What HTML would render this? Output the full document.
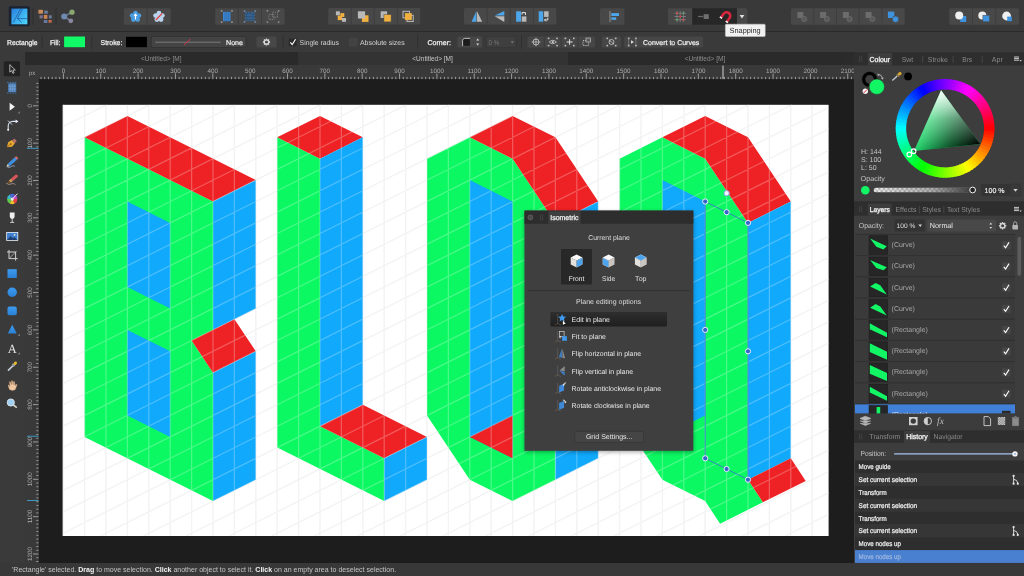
<!DOCTYPE html>
<html><head><meta charset="utf-8"><title>Affinity Designer - Isometric</title>
<style>
*{box-sizing:border-box;margin:0;padding:0}
html,body{width:1024px;height:576px;overflow:hidden;background:#1e1e1e}
body{font-family:"Liberation Sans",sans-serif;font-size:7px;color:#d8d8d8}
#app{position:relative;width:1024px;height:576px;overflow:hidden;background:#1e1e1e;will-change:transform}
svg text{text-rendering:geometricPrecision}
.abs{position:absolute}
#canvasbg{left:38.5px;top:79.2px;width:816px;height:485px;background:#1d1d1d}
#topbar{left:0;top:0;width:1024px;height:32px;background:#393939;border-bottom:1px solid #2a2a2a}
#ctxbar{left:0;top:32px;width:1024px;height:20px;background:#3a3a3a}
#tabbar{left:25px;top:52px;width:829px;height:13.4px;background:#2b2b2b}
.doctab{top:0;height:13.4px;line-height:13.6px;text-align:center;color:#8d8d8d;font-size:6.5px;background:#2a2a2a}
.doctab.act{background:#333;color:#c8c8c8}
#hruler{left:25px;top:65.4px;width:829px;height:13.8px;background:#393939}
#vruler{left:25px;top:65.4px;width:13.5px;height:498.6px;background:#393939}
#toolcol{left:0;top:52px;width:25px;height:512px;background:#3a3a3a}
#status{left:0;top:563px;width:1024px;height:13px;background:#383838;line-height:13.2px;font-size:7.03px;color:#c4c4c4;white-space:nowrap}
#status span{position:absolute;left:12px;top:0}
#status b{color:#f2f2f2}

</style></head><body>
<div id="app">
<div class="abs" id="canvasbg"></div>
<svg class="abs" style="left:0;top:0" width="1024" height="576" viewBox="0 0 1024 576">
<defs><clipPath id="pg"><rect x="62.7" y="104.8" width="765.9" height="431.2"/></clipPath></defs>
<rect x="62.7" y="104.8" width="765.9" height="431.2" fill="#fff"/>
<path d="M63.2 104.8V536.0M84.6 104.8V536.0M106.0 104.8V536.0M127.4 104.8V536.0M148.8 104.8V536.0M170.2 104.8V536.0M191.6 104.8V536.0M213.0 104.8V536.0M234.4 104.8V536.0M255.8 104.8V536.0M277.2 104.8V536.0M298.6 104.8V536.0M320.0 104.8V536.0M341.4 104.8V536.0M362.8 104.8V536.0M384.2 104.8V536.0M405.6 104.8V536.0M427.0 104.8V536.0M448.4 104.8V536.0M469.8 104.8V536.0M491.2 104.8V536.0M512.6 104.8V536.0M534.0 104.8V536.0M555.4 104.8V536.0M576.8 104.8V536.0M598.2 104.8V536.0M619.6 104.8V536.0M641.0 104.8V536.0M662.4 104.8V536.0M683.8 104.8V536.0M705.2 104.8V536.0M726.6 104.8V536.0M748.0 104.8V536.0M769.4 104.8V536.0M790.8 104.8V536.0M812.2 104.8V536.0M62.7 105.5L64.0 104.8M62.7 126.8L106.8 104.8M62.7 148.2L149.6 104.8M62.7 169.7L192.4 104.8M62.7 191.1L235.2 104.8M62.7 212.4L278.0 104.8M62.7 233.8L320.8 104.8M62.7 255.2L363.6 104.8M62.7 276.6L406.4 104.8M62.7 298.1L449.2 104.8M62.7 319.4L492.0 104.8M62.7 340.8L534.8 104.8M62.7 362.2L577.6 104.8M62.7 383.6L620.4 104.8M62.7 405.0L663.2 104.8M62.7 426.4L706.0 104.8M62.7 447.8L748.8 104.8M62.7 469.2L791.6 104.8M62.7 490.6L828.6 107.7M62.7 512.0L828.6 129.1M62.7 533.5L828.6 150.5M100.4 536.0L828.6 171.9M143.2 536.0L828.6 193.3M186.0 536.0L828.6 214.7M228.8 536.0L828.6 236.1M271.6 536.0L828.6 257.5M314.4 536.0L828.6 278.9M357.2 536.0L828.6 300.3M400.0 536.0L828.6 321.7M442.8 536.0L828.6 343.1M485.6 536.0L828.6 364.5M528.4 536.0L828.6 385.9M571.2 536.0L828.6 407.3M614.0 536.0L828.6 428.7M656.8 536.0L828.6 450.1M699.6 536.0L828.6 471.5M742.4 536.0L828.6 492.9M785.2 536.0L828.6 514.3M828.0 536.0L828.6 535.7" stroke="#e6e6e6" stroke-width="1.25" fill="none" opacity="0.66" clip-path="url(#pg)"/>
<polygon points="84.6,137.3 213.0,201.5 213.0,329.9 191.6,340.6 213.0,372.7 213.0,501.1 84.6,436.9" fill="#0cf862" />
<polygon points="127.4,201.5 170.2,222.9 170.2,308.5 127.4,287.1" fill="#10a9fc" />
<polygon points="127.4,329.9 170.2,351.3 170.2,436.9 127.4,415.5" fill="#10a9fc" />
<polygon points="84.6,137.3 127.4,115.9 255.8,180.1 213.0,201.5" fill="#ee2224" />
<polygon points="213.0,201.5 255.8,180.1 255.8,308.5 213.0,329.9" fill="#10a9fc" />
<polygon points="191.6,340.6 234.4,319.2 255.8,351.3 213.0,372.7" fill="#ee2224" />
<polygon points="213.0,372.7 255.8,351.3 255.8,479.7 213.0,501.1" fill="#10a9fc" />
<polygon points="277.2,137.3 320.0,158.7 320.0,426.2 384.2,458.3 384.2,501.1 277.2,447.6" fill="#0cf862" />
<polygon points="277.2,137.3 320.0,115.9 362.8,137.3 320.0,158.7" fill="#ee2224" />
<polygon points="320.0,158.7 362.8,137.3 362.8,404.8 320.0,426.2" fill="#10a9fc" />
<polygon points="320.0,426.2 362.8,404.8 427.0,436.9 384.2,458.3" fill="#ee2224" />
<polygon points="384.2,458.3 427.0,436.9 427.0,479.7 384.2,501.1" fill="#10a9fc" />
<polygon points="427.0,158.7 469.8,137.3 512.6,158.7 555.4,222.9 555.4,479.7 512.6,501.1 469.8,479.7 427.0,415.5" fill="#0cf862" />
<polygon points="469.8,180.1 512.6,201.5 512.6,458.3 469.8,436.9" fill="#10a9fc" />
<polygon points="469.8,436.9 512.6,415.5 512.6,458.3" fill="#ee2224" />
<polygon points="469.8,137.3 512.6,115.9 555.4,137.3 598.2,201.5 555.4,222.9 512.6,158.7" fill="#ee2224" />
<polygon points="555.4,222.9 598.2,201.5 598.2,458.3 555.4,479.7" fill="#10a9fc" />
<polygon points="619.6,158.7 662.4,137.3 705.2,158.7 748.0,222.9 748.0,479.7 762.9,502.3 720.1,523.7 705.2,501.1 662.4,479.7 619.6,415.5" fill="#0cf862" />
<polygon points="662.4,180.1 705.2,201.5 705.2,415.5 662.4,436.9" fill="#10a9fc" />
<polygon points="662.4,137.3 705.2,115.9 748.0,137.3 790.8,201.5 748.0,222.9 705.2,158.7" fill="#ee2224" />
<polygon points="748.0,222.9 790.8,201.5 790.8,458.3 748.0,479.7" fill="#10a9fc" />
<polygon points="748.0,479.7 790.8,458.3 805.7,480.9 762.9,502.3" fill="#ee2224" />
<path d="M63.2 104.8V536.0M84.6 104.8V536.0M106.0 104.8V536.0M127.4 104.8V536.0M148.8 104.8V536.0M170.2 104.8V536.0M191.6 104.8V536.0M213.0 104.8V536.0M234.4 104.8V536.0M255.8 104.8V536.0M277.2 104.8V536.0M298.6 104.8V536.0M320.0 104.8V536.0M341.4 104.8V536.0M362.8 104.8V536.0M384.2 104.8V536.0M405.6 104.8V536.0M427.0 104.8V536.0M448.4 104.8V536.0M469.8 104.8V536.0M491.2 104.8V536.0M512.6 104.8V536.0M534.0 104.8V536.0M555.4 104.8V536.0M576.8 104.8V536.0M598.2 104.8V536.0M619.6 104.8V536.0M641.0 104.8V536.0M662.4 104.8V536.0M683.8 104.8V536.0M705.2 104.8V536.0M726.6 104.8V536.0M748.0 104.8V536.0M769.4 104.8V536.0M790.8 104.8V536.0M812.2 104.8V536.0M62.7 105.5L64.0 104.8M62.7 126.8L106.8 104.8M62.7 148.2L149.6 104.8M62.7 169.7L192.4 104.8M62.7 191.1L235.2 104.8M62.7 212.4L278.0 104.8M62.7 233.8L320.8 104.8M62.7 255.2L363.6 104.8M62.7 276.6L406.4 104.8M62.7 298.1L449.2 104.8M62.7 319.4L492.0 104.8M62.7 340.8L534.8 104.8M62.7 362.2L577.6 104.8M62.7 383.6L620.4 104.8M62.7 405.0L663.2 104.8M62.7 426.4L706.0 104.8M62.7 447.8L748.8 104.8M62.7 469.2L791.6 104.8M62.7 490.6L828.6 107.7M62.7 512.0L828.6 129.1M62.7 533.5L828.6 150.5M100.4 536.0L828.6 171.9M143.2 536.0L828.6 193.3M186.0 536.0L828.6 214.7M228.8 536.0L828.6 236.1M271.6 536.0L828.6 257.5M314.4 536.0L828.6 278.9M357.2 536.0L828.6 300.3M400.0 536.0L828.6 321.7M442.8 536.0L828.6 343.1M485.6 536.0L828.6 364.5M528.4 536.0L828.6 385.9M571.2 536.0L828.6 407.3M614.0 536.0L828.6 428.7M656.8 536.0L828.6 450.1M699.6 536.0L828.6 471.5M742.4 536.0L828.6 492.9M785.2 536.0L828.6 514.3M828.0 536.0L828.6 535.7" stroke="#ffffff" stroke-width="1.25" fill="none" opacity="0.25" clip-path="url(#pg)"/>
<path d="M705.2 201.5L748.0 222.9V479.7L705.2 458.3Z" fill="none" stroke="#3b6fd0" stroke-width="0.8"/><circle cx="705.2" cy="201.5" r="2.6" fill="#3565c8" stroke="#e6edff" stroke-width="1"/><circle cx="726.6" cy="212.2" r="2.6" fill="#3565c8" stroke="#e6edff" stroke-width="1"/><circle cx="748.0" cy="222.9" r="2.6" fill="#3565c8" stroke="#e6edff" stroke-width="1"/><circle cx="705.2" cy="329.9" r="2.6" fill="#3565c8" stroke="#e6edff" stroke-width="1"/><circle cx="748.0" cy="351.3" r="2.6" fill="#3565c8" stroke="#e6edff" stroke-width="1"/><circle cx="705.2" cy="458.3" r="2.6" fill="#3565c8" stroke="#e6edff" stroke-width="1"/><circle cx="726.6" cy="469.0" r="2.6" fill="#3565c8" stroke="#e6edff" stroke-width="1"/><circle cx="748.0" cy="479.7" r="2.6" fill="#3565c8" stroke="#e6edff" stroke-width="1"/><circle cx="726.6" cy="193.2" r="2.6" fill="#f4f6ff" stroke="#8aa4e6" stroke-width="1"/>
</svg>
<div class="abs" id="topbar"></div>
<div class="abs" id="ctxbar"></div>
<div class="abs" id="tabbar"><div class="abs doctab" style="left:0;width:272.5px">&lt;Untitled&gt; [M]</div><div class="abs doctab act" style="left:272.5px;width:270.1px">&lt;Untitled&gt; [M]</div><div class="abs doctab" style="left:542.6px;width:274.8px;">&lt;Untitled&gt; [M]</div></div>
<div class="abs" id="hruler"></div>
<div class="abs" id="vruler"></div>
<svg class="abs" style="left:0;top:0" width="1024" height="576" viewBox="0 0 1024 576" font-family="Liberation Sans, sans-serif" font-size="6.3" fill="#ababab">
<path d="M40.99 76.9V79.2M44.72 76.9V79.2M48.46 76.9V79.2M52.20 76.9V79.2M55.93 76.9V79.2M59.66 76.9V79.2M63.40 73.4V79.2M67.14 76.9V79.2M70.87 76.9V79.2M74.61 76.9V79.2M78.34 76.9V79.2M82.08 76.9V79.2M85.81 76.9V79.2M89.55 76.9V79.2M93.28 76.9V79.2M97.02 76.9V79.2M100.75 73.4V79.2M104.48 76.9V79.2M108.22 76.9V79.2M111.95 76.9V79.2M115.69 76.9V79.2M119.42 76.9V79.2M123.16 76.9V79.2M126.89 76.9V79.2M130.63 76.9V79.2M134.37 76.9V79.2M138.10 73.4V79.2M141.84 76.9V79.2M145.57 76.9V79.2M149.31 76.9V79.2M153.04 76.9V79.2M156.78 76.9V79.2M160.51 76.9V79.2M164.25 76.9V79.2M167.98 76.9V79.2M171.72 76.9V79.2M175.45 73.4V79.2M179.19 76.9V79.2M182.92 76.9V79.2M186.66 76.9V79.2M190.39 76.9V79.2M194.12 76.9V79.2M197.86 76.9V79.2M201.59 76.9V79.2M205.33 76.9V79.2M209.06 76.9V79.2M212.80 73.4V79.2M216.53 76.9V79.2M220.27 76.9V79.2M224.00 76.9V79.2M227.74 76.9V79.2M231.47 76.9V79.2M235.21 76.9V79.2M238.94 76.9V79.2M242.68 76.9V79.2M246.41 76.9V79.2M250.15 73.4V79.2M253.88 76.9V79.2M257.62 76.9V79.2M261.36 76.9V79.2M265.09 76.9V79.2M268.82 76.9V79.2M272.56 76.9V79.2M276.30 76.9V79.2M280.03 76.9V79.2M283.76 76.9V79.2M287.50 73.4V79.2M291.24 76.9V79.2M294.97 76.9V79.2M298.70 76.9V79.2M302.44 76.9V79.2M306.18 76.9V79.2M309.91 76.9V79.2M313.64 76.9V79.2M317.38 76.9V79.2M321.11 76.9V79.2M324.85 73.4V79.2M328.58 76.9V79.2M332.32 76.9V79.2M336.05 76.9V79.2M339.79 76.9V79.2M343.52 76.9V79.2M347.26 76.9V79.2M351.00 76.9V79.2M354.73 76.9V79.2M358.46 76.9V79.2M362.20 73.4V79.2M365.94 76.9V79.2M369.67 76.9V79.2M373.40 76.9V79.2M377.14 76.9V79.2M380.88 76.9V79.2M384.61 76.9V79.2M388.34 76.9V79.2M392.08 76.9V79.2M395.81 76.9V79.2M399.55 73.4V79.2M403.28 76.9V79.2M407.02 76.9V79.2M410.75 76.9V79.2M414.49 76.9V79.2M418.22 76.9V79.2M421.96 76.9V79.2M425.69 76.9V79.2M429.43 76.9V79.2M433.16 76.9V79.2M436.90 73.4V79.2M440.63 76.9V79.2M444.37 76.9V79.2M448.10 76.9V79.2M451.84 76.9V79.2M455.57 76.9V79.2M459.31 76.9V79.2M463.04 76.9V79.2M466.78 76.9V79.2M470.51 76.9V79.2M474.25 73.4V79.2M477.98 76.9V79.2M481.72 76.9V79.2M485.45 76.9V79.2M489.19 76.9V79.2M492.92 76.9V79.2M496.66 76.9V79.2M500.39 76.9V79.2M504.13 76.9V79.2M507.86 76.9V79.2M511.60 73.4V79.2M515.34 76.9V79.2M519.07 76.9V79.2M522.80 76.9V79.2M526.54 76.9V79.2M530.27 76.9V79.2M534.01 76.9V79.2M537.75 76.9V79.2M541.48 76.9V79.2M545.22 76.9V79.2M548.95 73.4V79.2M552.69 76.9V79.2M556.42 76.9V79.2M560.15 76.9V79.2M563.89 76.9V79.2M567.62 76.9V79.2M571.36 76.9V79.2M575.10 76.9V79.2M578.83 76.9V79.2M582.56 76.9V79.2M586.30 73.4V79.2M590.03 76.9V79.2M593.77 76.9V79.2M597.50 76.9V79.2M601.24 76.9V79.2M604.98 76.9V79.2M608.71 76.9V79.2M612.44 76.9V79.2M616.18 76.9V79.2M619.91 76.9V79.2M623.65 73.4V79.2M627.38 76.9V79.2M631.12 76.9V79.2M634.86 76.9V79.2M638.59 76.9V79.2M642.32 76.9V79.2M646.06 76.9V79.2M649.79 76.9V79.2M653.53 76.9V79.2M657.26 76.9V79.2M661.00 73.4V79.2M664.74 76.9V79.2M668.47 76.9V79.2M672.20 76.9V79.2M675.94 76.9V79.2M679.67 76.9V79.2M683.41 76.9V79.2M687.14 76.9V79.2M690.88 76.9V79.2M694.62 76.9V79.2M698.35 73.4V79.2M702.08 76.9V79.2M705.82 76.9V79.2M709.55 76.9V79.2M713.29 76.9V79.2M717.02 76.9V79.2M720.76 76.9V79.2M724.50 76.9V79.2M728.23 76.9V79.2M731.96 76.9V79.2M735.70 73.4V79.2M739.43 76.9V79.2M743.17 76.9V79.2M746.90 76.9V79.2M750.64 76.9V79.2M754.38 76.9V79.2M758.11 76.9V79.2M761.85 76.9V79.2M765.58 76.9V79.2M769.31 76.9V79.2M773.05 73.4V79.2M776.78 76.9V79.2M780.52 76.9V79.2M784.25 76.9V79.2M787.99 76.9V79.2M791.73 76.9V79.2M795.46 76.9V79.2M799.19 76.9V79.2M802.93 76.9V79.2M806.66 76.9V79.2M810.40 73.4V79.2M814.13 76.9V79.2M817.87 76.9V79.2M821.61 76.9V79.2M825.34 76.9V79.2M829.07 76.9V79.2M832.81 76.9V79.2M836.54 76.9V79.2M840.28 76.9V79.2M844.01 76.9V79.2M847.75 73.4V79.2M851.49 76.9V79.2M36.3 83.39H38.4M36.3 87.12H38.4M36.3 90.86H38.4M36.3 94.59H38.4M36.3 98.33H38.4M36.3 102.06H38.4M33 105.80H38.4M36.3 109.53H38.4M36.3 113.27H38.4M36.3 117.00H38.4M36.3 120.74H38.4M36.3 124.47H38.4M36.3 128.21H38.4M36.3 131.94H38.4M36.3 135.68H38.4M36.3 139.41H38.4M33 143.15H38.4M36.3 146.88H38.4M36.3 150.62H38.4M36.3 154.35H38.4M36.3 158.09H38.4M36.3 161.82H38.4M36.3 165.56H38.4M36.3 169.29H38.4M36.3 173.03H38.4M36.3 176.76H38.4M33 180.50H38.4M36.3 184.24H38.4M36.3 187.97H38.4M36.3 191.70H38.4M36.3 195.44H38.4M36.3 199.18H38.4M36.3 202.91H38.4M36.3 206.64H38.4M36.3 210.38H38.4M36.3 214.12H38.4M33 217.85H38.4M36.3 221.58H38.4M36.3 225.32H38.4M36.3 229.06H38.4M36.3 232.79H38.4M36.3 236.52H38.4M36.3 240.26H38.4M36.3 244.00H38.4M36.3 247.73H38.4M36.3 251.46H38.4M33 255.20H38.4M36.3 258.94H38.4M36.3 262.67H38.4M36.3 266.40H38.4M36.3 270.14H38.4M36.3 273.88H38.4M36.3 277.61H38.4M36.3 281.34H38.4M36.3 285.08H38.4M36.3 288.81H38.4M33 292.55H38.4M36.3 296.28H38.4M36.3 300.02H38.4M36.3 303.75H38.4M36.3 307.49H38.4M36.3 311.23H38.4M36.3 314.96H38.4M36.3 318.69H38.4M36.3 322.43H38.4M36.3 326.17H38.4M33 329.90H38.4M36.3 333.63H38.4M36.3 337.37H38.4M36.3 341.11H38.4M36.3 344.84H38.4M36.3 348.57H38.4M36.3 352.31H38.4M36.3 356.05H38.4M36.3 359.78H38.4M36.3 363.51H38.4M33 367.25H38.4M36.3 370.99H38.4M36.3 374.72H38.4M36.3 378.45H38.4M36.3 382.19H38.4M36.3 385.93H38.4M36.3 389.66H38.4M36.3 393.40H38.4M36.3 397.13H38.4M36.3 400.87H38.4M33 404.60H38.4M36.3 408.34H38.4M36.3 412.07H38.4M36.3 415.81H38.4M36.3 419.54H38.4M36.3 423.28H38.4M36.3 427.01H38.4M36.3 430.75H38.4M36.3 434.48H38.4M36.3 438.22H38.4M33 441.95H38.4M36.3 445.69H38.4M36.3 449.42H38.4M36.3 453.16H38.4M36.3 456.89H38.4M36.3 460.62H38.4M36.3 464.36H38.4M36.3 468.10H38.4M36.3 471.83H38.4M36.3 475.56H38.4M33 479.30H38.4M36.3 483.04H38.4M36.3 486.77H38.4M36.3 490.50H38.4M36.3 494.24H38.4M36.3 497.98H38.4M36.3 501.71H38.4M36.3 505.44H38.4M36.3 509.18H38.4M36.3 512.91H38.4M33 516.65H38.4M36.3 520.38H38.4M36.3 524.12H38.4M36.3 527.86H38.4M36.3 531.59H38.4M36.3 535.32H38.4M36.3 539.06H38.4M36.3 542.79H38.4M36.3 546.53H38.4M36.3 550.26H38.4M33 554.00H38.4M36.3 557.74H38.4M36.3 561.47H38.4" stroke="#bcbcbc" stroke-width="0.75" fill="none"/>
<text x="63.4" y="72.9" text-anchor="middle">0</text><text x="100.8" y="72.9" text-anchor="middle">100</text><text x="138.1" y="72.9" text-anchor="middle">200</text><text x="175.4" y="72.9" text-anchor="middle">300</text><text x="212.8" y="72.9" text-anchor="middle">400</text><text x="250.2" y="72.9" text-anchor="middle">500</text><text x="287.5" y="72.9" text-anchor="middle">600</text><text x="324.8" y="72.9" text-anchor="middle">700</text><text x="362.2" y="72.9" text-anchor="middle">800</text><text x="399.5" y="72.9" text-anchor="middle">900</text><text x="436.9" y="72.9" text-anchor="middle">1000</text><text x="474.2" y="72.9" text-anchor="middle">1100</text><text x="511.6" y="72.9" text-anchor="middle">1200</text><text x="549.0" y="72.9" text-anchor="middle">1300</text><text x="586.3" y="72.9" text-anchor="middle">1400</text><text x="623.6" y="72.9" text-anchor="middle">1500</text><text x="661.0" y="72.9" text-anchor="middle">1600</text><text x="698.4" y="72.9" text-anchor="middle">1700</text><text x="735.7" y="72.9" text-anchor="middle">1800</text><text x="773.0" y="72.9" text-anchor="middle">1900</text><text x="810.4" y="72.9" text-anchor="middle">2000</text><text x="847.8" y="72.9" text-anchor="middle">2100</text><text transform="translate(31.9 105.8) rotate(-90)" text-anchor="middle">0</text><text transform="translate(31.9 143.2) rotate(-90)" text-anchor="middle">100</text><text transform="translate(31.9 180.5) rotate(-90)" text-anchor="middle">200</text><text transform="translate(31.9 217.8) rotate(-90)" text-anchor="middle">300</text><text transform="translate(31.9 255.2) rotate(-90)" text-anchor="middle">400</text><text transform="translate(31.9 292.6) rotate(-90)" text-anchor="middle">500</text><text transform="translate(31.9 329.9) rotate(-90)" text-anchor="middle">600</text><text transform="translate(31.9 367.2) rotate(-90)" text-anchor="middle">700</text><text transform="translate(31.9 404.6) rotate(-90)" text-anchor="middle">800</text><text transform="translate(31.9 441.9) rotate(-90)" text-anchor="middle">900</text><text transform="translate(31.9 479.3) rotate(-90)" text-anchor="middle">1000</text><text transform="translate(31.9 516.6) rotate(-90)" text-anchor="middle">1100</text><text transform="translate(31.9 554.0) rotate(-90)" text-anchor="middle">1200</text>
<text x="29" y="74.8" font-size="6">px</text>
<path d="M27 148.3H38.5M27 436.2H38.5M27 500.5H38.5" stroke="#3fb0e8" stroke-width="0.8"/>
<path d="M723 65.6V79.2" stroke="#e6e6e6" stroke-width="0.9"/>
</svg>
<div class="abs" id="toolcol"></div>
<svg class="abs" style="left:0;top:52px" width="25" height="512" viewBox="0 52 25 512" font-family="Liberation Serif, serif">
<rect x="3.8" y="61.2" width="16.2" height="15" rx="1.5" fill="#222"/>
<path d="M9.8 64.6V72.2L11.6 70.6L12.9 73.4L14.1 72.8L12.9 70.2L15.3 70Z" fill="#2a2a2a" stroke="#d0d0d0" stroke-width="0.8" stroke-linejoin="round"/>
<rect x="8.2" y="83.4" width="8" height="8.6" fill="#4a7db8"/><path d="M10.2 83.4V92M12.2 83.4V92M14.2 83.4V92M8.2 86.2H16.2M8.2 89H16.2" stroke="#8db2dc" stroke-width="0.5"/>
<path d="M7 82.4H17.4M7 93H17.4" stroke="#3f7fc0" stroke-width="0.9" stroke-dasharray="1.6 1"/>
<path d="M9.6 102.8V110.8L14.9 106.8Z" fill="#f4f4f4"/><path d="M20 111V113.4H17.6Z" fill="#777"/>
<path d="M8.2 130.4V126A4.6 4.6 0 0 1 12.8 121.4H17.6" stroke="#d6e2f0" stroke-width="1.1" fill="none"/><path d="M8 120.6L12 124.6" stroke="#d6e2f0" stroke-width="0.9"/><path d="M15.6 119.6L18.4 121.4L15.6 123.2Z" fill="#e8eef8"/><circle cx="8.2" cy="129.8" r="1" fill="#e8eef8"/>
<g transform="translate(11.2 143.6) rotate(-40) scale(0.94)"><path d="M-6 0L-1.5 -3.2L3 -2.4V2.4L-1.5 3.2Z" fill="#e6a830"/><path d="M-6 0H-1" stroke="#6a4a10" stroke-width="0.6"/><rect x="3" y="-2" width="3.2" height="4" fill="#b8706a"/><circle cx="-0.6" cy="0" r="0.8" fill="#6a4a10"/></g>
<g transform="translate(12.2 161.8) rotate(-42)"><rect x="-5" y="-1.6" width="10.4" height="3.2" rx="0.8" fill="#3f8fe0"/><path d="M-5 -1.6L-7.4 0L-5 1.6Z" fill="#e8d0a8"/><rect x="5" y="-1.6" width="1.8" height="3.2" fill="#d86a6a"/></g><path d="M6.6 166.6Q9 168.4 11.2 166.6T15 166.4" stroke="#9ab0cc" stroke-width="0.8" fill="none"/>
<g transform="translate(12.4 179.4) rotate(-40)"><rect x="-1" y="-1.5" width="7.6" height="3" rx="1.2" fill="#d8555a"/><rect x="-3.4" y="-1.5" width="2.6" height="3" fill="#c8a060"/><path d="M-3.4 -1.5L-7 0L-3.4 1.5Z" fill="#7a4a2a"/></g><path d="M6.2 183Q8.6 185.4 11 184T15.4 184.6" stroke="#b0a090" stroke-width="0.8" fill="none"/>
<path d="M12.2 199.1L17.40 199.10A5.2 5.2 0 0 1 14.80 203.60Z" fill="#e84040"/>
<path d="M12.2 199.1L14.80 203.60A5.2 5.2 0 0 1 9.60 203.60Z" fill="#e8c030"/>
<path d="M12.2 199.1L9.60 203.60A5.2 5.2 0 0 1 7.00 199.10Z" fill="#60c848"/>
<path d="M12.2 199.1L7.00 199.10A5.2 5.2 0 0 1 9.60 194.60Z" fill="#38b8c8"/>
<path d="M12.2 199.1L9.60 194.60A5.2 5.2 0 0 1 14.80 194.60Z" fill="#4868d8"/>
<path d="M12.2 199.1L14.80 194.60A5.2 5.2 0 0 1 17.40 199.10Z" fill="#c048c8"/>
<circle cx="12.2" cy="199.1" r="1.6" fill="#e8e8e8"/><path d="M13 198.4L17.6 193.6" stroke="#e8e8e8" stroke-width="1"/>
<path d="M9.8 212.6H14.6V216.6A2.4 2.4 0 0 1 9.8 216.6Z" fill="#f0f0f0"/><path d="M12.2 218.6V222M10.2 222.4H14.2" stroke="#e0e0e0" stroke-width="0.9"/>
<rect x="6.2" y="232" width="12" height="8.8" fill="#e8eef4"/><rect x="7" y="232.8" width="10.4" height="7.2" fill="#3f7fd0"/><path d="M7 240L10.6 236L13 238.2L14.6 237L17.4 240Z" fill="#1f3f70"/><circle cx="14.6" cy="234.8" r="0.9" fill="#f4f0c0"/>
<path d="M9 250V258.6H17.6M7 252H15.6V260.6" stroke="#d0d0d0" stroke-width="1" fill="none"/><path d="M9 258.6L16.6 251" stroke="#d0d0d0" stroke-width="0.7"/>
<defs><linearGradient id="tb" x1="0" y1="0" x2="0" y2="1"><stop offset="0" stop-color="#3d9cf0"/><stop offset="1" stop-color="#2a80d4"/></linearGradient></defs>
<rect x="7.5" y="269.2" width="9.3" height="8.8" fill="url(#tb)"/>
<circle cx="12.2" cy="292.3" r="4.7" fill="url(#tb)"/>
<rect x="7.5" y="306.5" width="9.3" height="8.8" rx="2" fill="url(#tb)"/>
<path d="M7.8 333.4L12.2 324.7L16.8 333.4Z" fill="url(#tb)"/><path d="M20 333.6V336H17.6Z" fill="#777"/>
<text x="12.2" y="352.6" font-size="12.5" fill="#e4e4e4" text-anchor="middle">A</text><path d="M20 352V354.4H17.6Z" fill="#777"/>
<g transform="translate(12.2 366.4) rotate(-45)"><rect x="-6" y="-0.8" width="7" height="1.6" fill="#c8d0d8"/><rect x="0.6" y="-1.5" width="2.2" height="3" fill="#9aa0a8"/><rect x="2.6" y="-1.4" width="3.6" height="2.8" rx="1.2" fill="#e8b830"/></g>
<path d="M8 385.4L9.4 389.4Q12.4 391.6 15.4 389.6L17.2 384.6L15.8 384.2L15 386L14.6 381.6H13.4L13.2 385L12.6 380.8H11.4L11.4 385L10.4 381.8H9.2L10 386.6L8.8 384.8Z" fill="#f0c8a4" stroke="#b88a60" stroke-width="0.3"/>
<path d="M13.4 405L16.8 407.6" stroke="#d8d0c0" stroke-width="1.6"/><circle cx="10.8" cy="402.5" r="3.6" fill="#9fd0f0" stroke="#e0e8f0" stroke-width="0.9"/>
</svg>
<svg class="abs" style="left:0;top:0" width="1024" height="53" viewBox="0 0 1024 53" font-family="Liberation Sans, sans-serif">
<rect x="8.8" y="6.3" width="21" height="20" rx="1.5" fill="#1b2230"/>
<defs><linearGradient id="lg" x1="0" y1="0" x2="1" y2="0.9"><stop offset="0" stop-color="#2a7cd8"/><stop offset="0.45" stop-color="#37a8ee"/><stop offset="1" stop-color="#4fd4fa"/></linearGradient></defs>
<rect x="11.4" y="8.6" width="16" height="15.7" fill="url(#lg)"/>
<path d="M20.6 8.6L13.4 22.4M22.6 8.6L17.4 18.6L21.6 22.4M17.4 18.6H27.4" stroke="#1d4f98" stroke-width="0.8" fill="none" opacity="0.85"/>
<path d="M33 8V25M56 8V25" stroke="#2e2e2e" stroke-width="1"/>
<rect x="38.4" y="9.8" width="4.6" height="3.9" fill="#c98a5c"/>
<rect x="44.2" y="10.6" width="3.6" height="3.1" fill="#6c7c9c"/>
<rect x="39.5" y="15.3" width="3.2" height="3.1" fill="#7c7490"/>
<rect x="43.8" y="14.9" width="3.6" height="3.9" fill="#cf8450"/>
<rect x="48.9" y="15.3" width="2.8" height="3.1" fill="#6c7c9c"/>
<rect x="43.8" y="20.0" width="3.6" height="3.0" fill="#6878a0"/>
<rect x="48.5" y="20.0" width="3.2" height="2.7" fill="#c8684c"/>
<path d="M64.2 16.5L72 12.2M64.2 16.5L70.8 20.8" stroke="#6c7a90" stroke-width="1.5"/>
<circle cx="64.2" cy="16.5" r="3" fill="#6f8ab0"/><circle cx="72" cy="12.2" r="2.6" fill="#8aa870"/><circle cx="70.8" cy="20.8" r="2.4" fill="#8a88a0"/>
<rect x="123.8" y="8.2" width="46.9" height="16.6" rx="1.5" fill="#484848"/>
<path d="M147.2 8.2V24.8" stroke="#3b3b3b" stroke-width="0.8"/>
<circle cx="135.53" cy="13.20" r="2.45" fill="#4b9ce0"/><circle cx="138.85" cy="15.62" r="2.45" fill="#4b9ce0"/><circle cx="137.58" cy="19.53" r="2.45" fill="#4b9ce0"/><circle cx="133.47" cy="19.53" r="2.45" fill="#4b9ce0"/><circle cx="132.20" cy="15.62" r="2.45" fill="#4b9ce0"/><circle cx="135.53" cy="16.70" r="3.4" fill="#4b9ce0"/>
<path d="M135.5 19.4V14.8M134.1 16L135.5 14.2L136.9 16" stroke="#fff" stroke-width="1.1" fill="none"/>
<circle cx="158.97" cy="13.20" r="2.45" fill="#b9d3ec"/><circle cx="162.30" cy="15.62" r="2.45" fill="#b9d3ec"/><circle cx="161.03" cy="19.53" r="2.45" fill="#b9d3ec"/><circle cx="156.92" cy="19.53" r="2.45" fill="#b9d3ec"/><circle cx="155.65" cy="15.62" r="2.45" fill="#b9d3ec"/><circle cx="158.97" cy="16.70" r="3.4" fill="#b9d3ec"/>
<path d="M155.8 20L162.2 13.4" stroke="#e0413e" stroke-width="1.3"/>
<rect x="215.2" y="8.2" width="69.4" height="16.6" rx="1.5" fill="#484848"/>
<path d="M238.3 8.2V24.8" stroke="#3b3b3b" stroke-width="0.8"/>
<path d="M261.5 8.2V24.8" stroke="#3b3b3b" stroke-width="0.8"/>
<rect x="223.0" y="11.8" width="7.6" height="9.4" fill="#3d84cc"/>
<path d="M224.9 11.8V21.2M226.8 11.8V21.2M228.7 11.8V21.2" stroke="#2a66a8" stroke-width="0.6"/>
<rect x="220.8" y="10.1" width="1.6" height="1.6" fill="#9a9a9a"/><rect x="220.8" y="21.3" width="1.6" height="1.6" fill="#9a9a9a"/><rect x="231.2" y="10.1" width="1.6" height="1.6" fill="#9a9a9a"/><rect x="231.2" y="21.3" width="1.6" height="1.6" fill="#9a9a9a"/>
<rect x="245.4" y="12.4" width="9" height="8.2" fill="#2f557c" stroke="#3f74a8" stroke-width="0.8" stroke-dasharray="1.6 1.2"/>
<path d="M246.9 15H252.9M246.9 18H252.9" stroke="#3f74a8" stroke-width="0.8"/>
<rect x="243.7" y="10.3" width="1.6" height="1.6" fill="#6d8eae"/><rect x="243.7" y="21.1" width="1.6" height="1.6" fill="#6d8eae"/><rect x="254.5" y="10.3" width="1.6" height="1.6" fill="#6d8eae"/><rect x="254.5" y="21.1" width="1.6" height="1.6" fill="#6d8eae"/>
<rect x="269.0" y="14.5" width="5" height="5" fill="none" stroke="#7c7c7c" stroke-width="0.9" stroke-dasharray="1.4 0.8"/>
<rect x="272.5" y="12.2" width="5" height="5" fill="none" stroke="#7c7c7c" stroke-width="0.9" stroke-dasharray="1.4 0.8"/>
<rect x="266.6" y="10.1" width="1.6" height="1.6" fill="#8c8c8c"/><rect x="266.6" y="21.3" width="1.6" height="1.6" fill="#8c8c8c"/><rect x="277.8" y="10.1" width="1.6" height="1.6" fill="#8c8c8c"/><rect x="277.8" y="21.3" width="1.6" height="1.6" fill="#8c8c8c"/>
<rect x="328.2" y="8.0" width="92.1" height="16.5" rx="1.5" fill="#484848"/>
<path d="M351.2 8.0V24.5" stroke="#3b3b3b" stroke-width="0.8"/>
<path d="M374.2 8.0V24.5" stroke="#3b3b3b" stroke-width="0.8"/>
<path d="M397.3 8.0V24.5" stroke="#3b3b3b" stroke-width="0.8"/>
<rect x="335.9" y="11.3" width="4" height="4" fill="#b9b9b9"/><rect x="340.4" y="13.1" width="3.9" height="3.9" fill="#f0b040"/><rect x="337.7" y="15.6" width="4.3" height="4.5" fill="#f0b040"/><rect x="342" y="18" width="4" height="3.8" fill="#b9b9b9"/>
<rect x="361.9" y="15.3" width="6.6" height="6.6" fill="#f0b040"/><rect x="357.9" y="11.3" width="7.2" height="7.2" fill="#b9b9b9"/>
<rect x="380.7" y="11.3" width="6.4" height="6.7" fill="#b9b9b9"/><rect x="383.9" y="14.5" width="7.2" height="7.4" fill="#f0b040" stroke="#484848" stroke-width="0.5"/>
<rect x="403" y="11.3" width="6.5" height="6.5" fill="none" stroke="#b9b9b9" stroke-width="1"/><rect x="407" y="15.3" width="6.2" height="6.2" fill="none" stroke="#b9b9b9" stroke-width="1"/><rect x="404.9" y="13.1" width="6.9" height="7" fill="#f0b040"/>
<rect x="464.0" y="8.0" width="92.4" height="16.5" rx="1.5" fill="#484848"/>
<path d="M487.1 8.0V24.5" stroke="#3b3b3b" stroke-width="0.8"/>
<path d="M510.2 8.0V24.5" stroke="#3b3b3b" stroke-width="0.8"/>
<path d="M533.3 8.0V24.5" stroke="#3b3b3b" stroke-width="0.8"/>
<polygon points="471.6,21.7 476.4,11 476.4,21.7" fill="#4ea6ea"/><polygon points="476.9,11 482.2,21.7 476.9,21.7" fill="#b9b9b9"/>
<polygon points="494.7,15.6 504.3,11 504.3,15.6" fill="#4ea6ea"/><polygon points="494.7,16.2 504.3,21.9 504.3,16.2" fill="#b9b9b9"/>
<rect x="516.1" y="11.3" width="4.9" height="10.4" fill="#4ea6ea"/><rect x="521.7" y="16.4" width="4.7" height="5.3" fill="#b9b9b9"/><path d="M522 14.6V12.6H525.4V15" stroke="#e8e8e8" stroke-width="1" fill="none"/>
<rect x="538.7" y="11.3" width="4.5" height="10.4" fill="#4ea6ea"/><rect x="544.1" y="11.3" width="4.5" height="5.6" fill="#b9b9b9"/><path d="M547.8 17.6V20H544.6M545.9 18.6L544.5 20L545.9 21.4" stroke="#f0f0f0" stroke-width="0.9" fill="none"/>
<rect x="600.0" y="8.2" width="24.5" height="16.6" rx="1.5" fill="#484848"/>
<path d="M610 11V22" stroke="#9a9a9a" stroke-width="0.9"/><rect x="611.3" y="13.1" width="7.7" height="2.9" fill="#4ea6ea"/><rect x="611.3" y="17.3" width="4.9" height="2.6" fill="#4ea6ea"/>
<rect x="668" y="8.2" width="79.3" height="16.6" rx="1.5" fill="#484848"/>
<rect x="692.2" y="8.2" width="44.8" height="16.6" fill="#272727"/>
<path d="M677 11V22M680.2 11V22M683.4 11V22M674.5 13.3H686M674.5 16.5H686M674.5 19.7H686" stroke="#8a8a8a" stroke-width="0.7"/>
<circle cx="677.0" cy="13.3" r="1" fill="#d84a4a"/>
<circle cx="680.2" cy="16.5" r="1" fill="#e03a3a"/>
<circle cx="683.4" cy="13.3" r="1" fill="#5aa86a"/>
<circle cx="677.0" cy="19.7" r="1" fill="#5aa86a"/>
<circle cx="683.4" cy="19.7" r="1" fill="#d84a4a"/>
<path d="M698 16.5H703" stroke="#6a6a6a" stroke-width="1.2"/><rect x="703.6" y="14.2" width="5.2" height="4.8" fill="#6e6e6e"/>
<g transform="translate(726.3 16.3) rotate(35)"><path d="M-3.6 4.6V-0.6A3.6 3.6 0 0 1 3.6 -0.6V4.6" fill="none" stroke="#d9263f" stroke-width="2.6"/><path d="M-4.9 3.4H-2.3V5H-4.9ZM2.3 3.4H4.9V5H2.3Z" fill="#f4f4f4"/></g>
<path d="M739.6 15L744.4 15L742 18.4Z" fill="#e0e0e0"/>
<rect x="791.0" y="8.2" width="113.7" height="16.6" rx="1.5" fill="#484848"/>
<path d="M813.7 8.2V24.8" stroke="#3b3b3b" stroke-width="0.8"/>
<path d="M836.5 8.2V24.8" stroke="#3b3b3b" stroke-width="0.8"/>
<path d="M859.2 8.2V24.8" stroke="#3b3b3b" stroke-width="0.8"/>
<path d="M882.0 8.2V24.8" stroke="#3b3b3b" stroke-width="0.8"/>
<rect x="797.4" y="12" width="6" height="6" fill="#6c6c6c"/><circle cx="804.2" cy="19" r="2.6" fill="#5a5a5a" stroke="#6c6c6c" stroke-width="0.8"/>
<rect x="820.1" y="12" width="6" height="6" fill="#6c6c6c"/><circle cx="826.9" cy="19" r="2.6" fill="#5a5a5a" stroke="#6c6c6c" stroke-width="0.8"/>
<rect x="842.9" y="12" width="6" height="6" fill="#6c6c6c"/><circle cx="849.6" cy="19" r="2.6" fill="#5a5a5a" stroke="#6c6c6c" stroke-width="0.8"/>
<rect x="865.6" y="12" width="6" height="6" fill="#6c6c6c"/><circle cx="872.4" cy="19" r="2.6" fill="#5a5a5a" stroke="#6c6c6c" stroke-width="0.8"/>
<rect x="887.9" y="11.6" width="6.4" height="6.4" fill="#3f93de"/><circle cx="895.5" cy="19.2" r="3.2" fill="#3f93de" stroke="#484848" stroke-width="0.7"/>
<rect x="949.2" y="8.2" width="69.8" height="16.6" rx="1.5" fill="#484848"/>
<path d="M972.5 8.2V24.8" stroke="#3b3b3b" stroke-width="0.8"/>
<path d="M995.7 8.2V24.8" stroke="#3b3b3b" stroke-width="0.8"/>
<rect x="960.2" y="16" width="6" height="6" fill="#3f93de"/><circle cx="959.2" cy="15.6" r="4" fill="#efefef"/>
<circle cx="982.3" cy="15.6" r="4" fill="#efefef"/><rect x="982.9" y="15.2" width="6.6" height="6.6" fill="#3f93de" stroke="#484848" stroke-width="0.5"/>
<circle cx="1006.6" cy="16" r="4.4" fill="#efefef"/><rect x="1007.2" y="16.6" width="4.6" height="4.6" fill="#3f93de"/>
<text x="7.0" y="44.6" font-size="7" fill="#f0f0f0" textLength="30.5" lengthAdjust="spacingAndGlyphs" stroke="#f0f0f0" stroke-width="0.25">Rectangle</text>
<path d="M42 35V49M91.8 35V49M283 35V49M417.7 35V49M521.5 35V49" stroke="#2f2f2f" stroke-width="0.9"/>
<text x="50.0" y="44.6" font-size="7" fill="#f0f0f0" textLength="10.5" lengthAdjust="spacingAndGlyphs" stroke="#f0f0f0" stroke-width="0.25">Fill:</text>
<rect x="64.1" y="36.5" width="20.9" height="10.7" fill="#10f966"/>
<text x="100.6" y="44.6" font-size="7" fill="#f0f0f0" textLength="21.7" lengthAdjust="spacingAndGlyphs" stroke="#f0f0f0" stroke-width="0.25">Stroke:</text>
<rect x="126" y="36.8" width="20.9" height="10.4" fill="#000"/>
<rect x="151.2" y="36.5" width="94.8" height="11" rx="1.5" fill="#444" stroke="#2c2c2c" stroke-width="0.6"/>
<path d="M155.3 42.2H220.7" stroke="#8a8a8a" stroke-width="0.8"/><path d="M184 45L190.5 39" stroke="#d8314f" stroke-width="1"/>
<text x="226.0" y="44.6" font-size="7" fill="#f0f0f0" textLength="17.0" lengthAdjust="spacingAndGlyphs" stroke="#f0f0f0" stroke-width="0.2">None</text>
<rect x="256.5" y="36.5" width="20" height="11" rx="1.5" fill="#474747"/>
<path d="M268.30 42.00L270.10 42.00M267.77 43.27L269.05 44.55M266.50 43.80L266.50 45.60M265.23 43.27L263.95 44.55M264.70 42.00L262.90 42.00M265.23 40.73L263.95 39.45M266.50 40.20L266.50 38.40M267.77 40.73L269.05 39.45" stroke="#d8d8d8" stroke-width="1.3"/><circle cx="266.5" cy="42" r="2.2" fill="none" stroke="#d8d8d8" stroke-width="1.3"/>
<rect x="288.8" y="38.4" width="7.8" height="7.8" rx="1" fill="#2a2a2a"/><path d="M290.3 42.4L292.2 44.6L295.6 39.2" stroke="#fff" stroke-width="1.1" fill="none"/>
<text x="299.6" y="44.6" font-size="7" fill="#d4d4d4" textLength="39.4" lengthAdjust="spacingAndGlyphs" >Single radius</text>
<rect x="349.4" y="38.4" width="7.8" height="7.8" rx="1" fill="#424242" stroke="#4a4a4a" stroke-width="0.5"/>
<text x="360.0" y="44.6" font-size="7" fill="#d4d4d4" textLength="44.6" lengthAdjust="spacingAndGlyphs" >Absolute sizes</text>
<text x="427.5" y="44.6" font-size="7" fill="#f0f0f0" textLength="23.5" lengthAdjust="spacingAndGlyphs" stroke="#f0f0f0" stroke-width="0.25">Corner:</text>
<rect x="457.4" y="36.5" width="24.8" height="11" rx="1.5" fill="#474747"/>
<rect x="462.3" y="38.2" width="7.6" height="7.6" fill="#1c1c1c"/><path d="M462.6 46V40.2A2 2 0 0 1 464.6 38.4H470" stroke="#cfcfcf" stroke-width="0.9" fill="none"/>
<path d="M476.2 40.4L477.7 38.6L479.2 40.4ZM476.2 43.6L477.7 45.4L479.2 43.6Z" fill="#d8d8d8"/>
<rect x="486" y="36.5" width="30.4" height="11" rx="1.5" fill="#3f3f3f" stroke="#333" stroke-width="0.5"/>
<text x="488.6" y="44.6" font-size="7" fill="#777" textLength="10.5" lengthAdjust="spacingAndGlyphs" >0 %</text>
<path d="M510.6 41.2H514L512.3 43.4Z" fill="#777"/>
<rect x="527.5" y="36.5" width="67.5" height="11" rx="1.5" fill="#464646"/>
<path d="M544.4 36.5V47.5" stroke="#383838" stroke-width="0.8"/>
<path d="M561.2 36.5V47.5" stroke="#383838" stroke-width="0.8"/>
<path d="M578.0 36.5V47.5" stroke="#383838" stroke-width="0.8"/>
<circle cx="536" cy="42" r="3" fill="none" stroke="#cfcfcf" stroke-width="0.8"/><path d="M531.6 42H540.4M536 37.8V46.2" stroke="#cfcfcf" stroke-width="0.7"/>
<rect x="547.8" y="37.6" width="1.6" height="1.6" fill="#bdbdbd"/><rect x="547.8" y="44.8" width="1.6" height="1.6" fill="#bdbdbd"/><rect x="556.2" y="37.6" width="1.6" height="1.6" fill="#bdbdbd"/><rect x="556.2" y="44.8" width="1.6" height="1.6" fill="#bdbdbd"/>
<path d="M549.2 42Q552.8 38.6 556.4 42Q552.8 45.4 549.2 42Z" fill="none" stroke="#cfcfcf" stroke-width="0.8"/><circle cx="552.8" cy="42" r="1.1" fill="#cfcfcf"/>
<rect x="564.6" y="37.6" width="1.6" height="1.6" fill="#bdbdbd"/><rect x="564.6" y="44.8" width="1.6" height="1.6" fill="#bdbdbd"/><rect x="573.0" y="37.6" width="1.6" height="1.6" fill="#bdbdbd"/><rect x="573.0" y="44.8" width="1.6" height="1.6" fill="#bdbdbd"/>
<path d="M566.6 42H572.6M569.6 39.2V44.8" stroke="#e0e0e0" stroke-width="1"/>
<rect x="583" y="40.5" width="5.6" height="5" fill="none" stroke="#cfcfcf" stroke-width="0.8" stroke-dasharray="1.2 0.9"/><rect x="586" y="38" width="4.4" height="4" fill="#5a5a5a" stroke="#bdbdbd" stroke-width="0.7"/>
<rect x="602" y="36.5" width="19" height="11" rx="1.5" fill="#464646"/>
<rect x="606.5" y="37.6" width="1.6" height="1.6" fill="#bdbdbd"/><rect x="606.5" y="44.8" width="1.6" height="1.6" fill="#bdbdbd"/><rect x="614.9" y="37.6" width="1.6" height="1.6" fill="#bdbdbd"/><rect x="614.9" y="44.8" width="1.6" height="1.6" fill="#bdbdbd"/>
<circle cx="611.5" cy="42" r="2.5" fill="none" stroke="#cfcfcf" stroke-width="0.8"/><path d="M609.2 39.8L613.8 44.2" stroke="#cfcfcf" stroke-width="0.8"/>
<rect x="624.3" y="36.5" width="78.7" height="11" rx="1.5" fill="#464646"/>
<rect x="627.9" y="37.6" width="1.6" height="1.6" fill="#bdbdbd"/><rect x="627.9" y="44.8" width="1.6" height="1.6" fill="#bdbdbd"/><rect x="635.1" y="37.6" width="1.6" height="1.6" fill="#bdbdbd"/><rect x="635.1" y="44.8" width="1.6" height="1.6" fill="#bdbdbd"/>
<path d="M631 40.2L634 42L631 43.8Z" fill="#d8d8d8"/><path d="M628.7 38.4V45.6M635.9 38.4V45.6" stroke="#9a9a9a" stroke-width="0.5"/>
<text x="643.0" y="44.6" font-size="7" fill="#f2f2f2" textLength="56.3" lengthAdjust="spacingAndGlyphs" stroke="#f2f2f2" stroke-width="0.2">Convert to Curves</text>
<rect x="725.4" y="24.2" width="39.8" height="12.3" rx="1" fill="#f1f1f1" stroke="#c8c8c8" stroke-width="0.5"/>
<text x="729.6" y="33" font-size="7.4" fill="#2a2a2a" textLength="31" lengthAdjust="spacingAndGlyphs">Snapping</text>
</svg>

<div class="abs" style="left:854px;top:52px;width:170px;height:511.5px;background:#3d3d3d"></div>
<svg class="abs" style="left:854px;top:52px" width="170" height="512" viewBox="854 52 170 512" font-family="Liberation Sans, sans-serif" font-size="7.2">
<rect x="854" y="52.2" width="170" height="13.2" fill="#2e2e2e"/>
<rect x="867.8" y="52.8" width="24.3" height="12.6" fill="#3d3d3d"/>
<path d="M859.6 55.8V61.8M861.6 55.8V61.8" stroke="#4a4a4a" stroke-width="0.7"/>
<text x="879.8" y="61.5" text-anchor="middle" fill="#f4f4f4" stroke="#f4f4f4" stroke-width="0.3" textLength="20.5" lengthAdjust="spacingAndGlyphs">Colour</text>
<text x="907.4" y="61.5" text-anchor="middle" fill="#8a8a8a" textLength="11.5" lengthAdjust="spacingAndGlyphs">Swt</text>
<text x="937.8" y="61.5" text-anchor="middle" fill="#8a8a8a" textLength="20.0" lengthAdjust="spacingAndGlyphs">Stroke</text>
<text x="967.2" y="61.5" text-anchor="middle" fill="#8a8a8a" textLength="9.8" lengthAdjust="spacingAndGlyphs">Brs</text>
<text x="997.3" y="61.5" text-anchor="middle" fill="#8a8a8a" textLength="11.0" lengthAdjust="spacingAndGlyphs">Apr</text>
<path d="M922.7 56V63M953.1 56V63M982.2 56V63" stroke="#4c4c4c" stroke-width="0.8"/>
<path d="M1014.0 57.0h5M1014.0 58.6h5M1014.0 60.2h5" stroke="#c8c8c8" stroke-width="1"/><path d="M1019.4 60.0h2.4l-1.2 1.6Z" fill="#c8c8c8"/>
<circle cx="869.6" cy="79.4" r="6" fill="none" stroke="#000" stroke-width="3.4"/><circle cx="869.6" cy="79.4" r="7.8" fill="none" stroke="#2a2a2a" stroke-width="0.5"/>
<circle cx="876.8" cy="86.7" r="7.7" fill="#12f565" stroke="#333" stroke-width="0.6"/>
<path d="M878.6 74.6Q881.6 74.4 882.4 78" stroke="#b8b8b8" stroke-width="0.9" fill="none"/><path d="M877.6 73.2L879.6 74.8L877.8 76.2ZM881 78L882.6 79.8L883.8 77.6Z" fill="#b8b8b8"/>
<circle cx="865.3" cy="91.3" r="2.7" fill="#f4f4f4"/><path d="M863.5 93.1L867.1 89.5" stroke="#e0303a" stroke-width="1"/>
<g transform="translate(896.8 76.4) rotate(-42)"><rect x="-6" y="-0.7" width="6.6" height="1.4" fill="#c0c8d0"/><rect x="0.4" y="-1.6" width="2" height="3.2" fill="#8a7a50"/><rect x="2.2" y="-1.5" width="3.6" height="3" rx="1.2" fill="#d8a830"/></g>
<circle cx="908.1" cy="76.4" r="3.9" fill="#000"/>
<polygon points="994.50,128.40 994.30,132.83 983.94,131.90 984.10,128.40" fill="hsl(2.0,100%,50%)"/>
<polygon points="994.38,131.85 993.87,136.25 983.60,134.60 984.00,131.12" fill="hsl(6.0,100%,50%)"/>
<polygon points="994.02,135.28 993.21,139.64 983.08,137.27 983.72,133.83" fill="hsl(10.0,100%,50%)"/>
<polygon points="993.42,138.67 992.30,142.96 982.37,139.90 983.25,136.51" fill="hsl(14.0,100%,50%)"/>
<polygon points="992.59,142.02 991.17,146.22 981.47,142.47 982.59,139.15" fill="hsl(18.0,100%,50%)"/>
<polygon points="991.52,145.30 989.82,149.39 980.40,144.97 981.75,141.74" fill="hsl(22.0,100%,50%)"/>
<polygon points="990.23,148.49 988.25,152.46 979.16,147.39 980.73,144.26" fill="hsl(26.0,100%,50%)"/>
<polygon points="988.72,151.59 986.46,155.41 977.75,149.72 979.53,146.71" fill="hsl(30.0,100%,50%)"/>
<polygon points="986.99,154.58 984.48,158.23 976.19,151.95 978.17,149.07" fill="hsl(34.0,100%,50%)"/>
<polygon points="985.07,157.44 982.30,160.90 974.47,154.06 976.65,151.32" fill="hsl(38.0,100%,50%)"/>
<polygon points="982.94,160.15 979.94,163.42 972.61,156.05 974.98,153.47" fill="hsl(42.0,100%,50%)"/>
<polygon points="980.64,162.72 977.41,165.77 970.61,157.90 973.15,155.49" fill="hsl(46.0,100%,50%)"/>
<polygon points="978.16,165.11 974.73,167.93 968.49,159.61 971.20,157.38" fill="hsl(50.0,100%,50%)"/>
<polygon points="975.51,167.33 971.90,169.90 966.26,161.16 969.11,159.13" fill="hsl(54.0,100%,50%)"/>
<polygon points="972.72,169.35 968.94,171.67 963.92,162.56 966.91,160.73" fill="hsl(58.0,100%,50%)"/>
<polygon points="969.80,171.18 965.86,173.22 961.49,163.79 964.60,162.17" fill="hsl(62.0,100%,50%)"/>
<polygon points="966.76,172.80 962.69,174.56 958.98,164.85 962.20,163.45" fill="hsl(66.0,100%,50%)"/>
<polygon points="963.61,174.20 959.42,175.68 956.41,165.72 959.71,164.56" fill="hsl(70.0,100%,50%)"/>
<polygon points="960.37,175.38 956.09,176.56 953.78,166.42 957.15,165.49" fill="hsl(74.0,100%,50%)"/>
<polygon points="957.05,176.33 952.70,177.21 951.10,166.94 954.53,166.24" fill="hsl(78.0,100%,50%)"/>
<polygon points="953.68,177.05 949.28,177.62 948.40,167.26 951.87,166.81" fill="hsl(82.0,100%,50%)"/>
<polygon points="950.26,177.53 945.84,177.79 945.68,167.40 949.18,167.19" fill="hsl(86.0,100%,50%)"/>
<polygon points="946.82,177.77 942.39,177.73 942.96,167.34 946.46,167.38" fill="hsl(90.0,100%,50%)"/>
<polygon points="943.38,177.77 938.95,177.42 940.25,167.10 943.74,167.38" fill="hsl(94.0,100%,50%)"/>
<polygon points="939.94,177.53 935.55,176.87 937.56,166.66 941.02,167.19" fill="hsl(98.0,100%,50%)"/>
<polygon points="936.52,177.05 932.19,176.08 934.91,166.05 938.33,166.81" fill="hsl(102.0,100%,50%)"/>
<polygon points="933.15,176.33 928.90,175.07 932.31,165.24 935.67,166.24" fill="hsl(106.0,100%,50%)"/>
<polygon points="929.83,175.38 925.68,173.82 929.77,164.26 933.05,165.49" fill="hsl(110.0,100%,50%)"/>
<polygon points="926.59,174.20 922.56,172.36 927.31,163.10 930.49,164.56" fill="hsl(114.0,100%,50%)"/>
<polygon points="923.44,172.80 919.55,170.68 924.93,161.78 928.00,163.45" fill="hsl(118.0,100%,50%)"/>
<polygon points="920.40,171.18 916.66,168.79 922.65,160.29 925.60,162.17" fill="hsl(122.0,100%,50%)"/>
<polygon points="917.48,169.35 913.91,166.71 920.48,158.65 923.29,160.73" fill="hsl(126.0,100%,50%)"/>
<polygon points="914.69,167.33 911.32,164.44 918.43,156.85 921.09,159.13" fill="hsl(130.0,100%,50%)"/>
<polygon points="912.04,165.11 908.89,162.00 916.51,154.93 919.00,157.38" fill="hsl(134.0,100%,50%)"/>
<polygon points="909.56,162.72 906.63,159.39 914.73,152.87 917.05,155.49" fill="hsl(138.0,100%,50%)"/>
<polygon points="907.26,160.15 904.56,156.63 913.10,150.69 915.22,153.47" fill="hsl(142.0,100%,50%)"/>
<polygon points="905.13,157.44 902.69,153.73 911.62,148.40 913.55,151.32" fill="hsl(146.0,100%,50%)"/>
<polygon points="903.21,154.58 901.03,150.71 910.31,146.02 912.03,149.07" fill="hsl(150.0,100%,50%)"/>
<polygon points="901.48,151.59 899.58,147.59 909.16,143.55 910.67,146.71" fill="hsl(154.0,100%,50%)"/>
<polygon points="899.97,148.49 898.35,144.36 908.19,141.00 909.47,144.26" fill="hsl(158.0,100%,50%)"/>
<polygon points="898.68,145.30 897.35,141.06 907.40,138.40 908.45,141.74" fill="hsl(162.0,100%,50%)"/>
<polygon points="897.61,142.02 896.58,137.70 906.80,135.74 907.61,139.15" fill="hsl(166.0,100%,50%)"/>
<polygon points="896.78,138.67 896.05,134.30 906.38,133.05 906.95,136.51" fill="hsl(170.0,100%,50%)"/>
<polygon points="896.18,135.28 895.76,130.86 906.15,130.34 906.48,133.83" fill="hsl(174.0,100%,50%)"/>
<polygon points="895.82,131.85 895.71,127.41 906.11,127.62 906.20,131.12" fill="hsl(178.0,100%,50%)"/>
<polygon points="895.70,128.40 895.90,123.97 906.26,124.90 906.10,128.40" fill="hsl(182.0,100%,50%)"/>
<polygon points="895.82,124.95 896.33,120.55 906.60,122.20 906.20,125.68" fill="hsl(186.0,100%,50%)"/>
<polygon points="896.18,121.52 896.99,117.16 907.12,119.53 906.48,122.97" fill="hsl(190.0,100%,50%)"/>
<polygon points="896.78,118.13 897.90,113.84 907.83,116.90 906.95,120.29" fill="hsl(194.0,100%,50%)"/>
<polygon points="897.61,114.78 899.03,110.58 908.73,114.33 907.61,117.65" fill="hsl(198.0,100%,50%)"/>
<polygon points="898.68,111.50 900.38,107.41 909.80,111.83 908.45,115.06" fill="hsl(202.0,100%,50%)"/>
<polygon points="899.97,108.31 901.95,104.34 911.04,109.41 909.47,112.54" fill="hsl(206.0,100%,50%)"/>
<polygon points="901.48,105.21 903.74,101.39 912.45,107.08 910.67,110.09" fill="hsl(210.0,100%,50%)"/>
<polygon points="903.21,102.22 905.72,98.57 914.01,104.85 912.03,107.73" fill="hsl(214.0,100%,50%)"/>
<polygon points="905.13,99.36 907.90,95.90 915.73,102.74 913.55,105.48" fill="hsl(218.0,100%,50%)"/>
<polygon points="907.26,96.65 910.26,93.38 917.59,100.75 915.22,103.33" fill="hsl(222.0,100%,50%)"/>
<polygon points="909.56,94.08 912.79,91.03 919.59,98.90 917.05,101.31" fill="hsl(226.0,100%,50%)"/>
<polygon points="912.04,91.69 915.47,88.87 921.71,97.19 919.00,99.42" fill="hsl(230.0,100%,50%)"/>
<polygon points="914.69,89.47 918.30,86.90 923.94,95.64 921.09,97.67" fill="hsl(234.0,100%,50%)"/>
<polygon points="917.48,87.45 921.26,85.13 926.28,94.24 923.29,96.07" fill="hsl(238.0,100%,50%)"/>
<polygon points="920.40,85.62 924.34,83.58 928.71,93.01 925.60,94.63" fill="hsl(242.0,100%,50%)"/>
<polygon points="923.44,84.00 927.51,82.24 931.22,91.95 928.00,93.35" fill="hsl(246.0,100%,50%)"/>
<polygon points="926.59,82.60 930.78,81.12 933.79,91.08 930.49,92.24" fill="hsl(250.0,100%,50%)"/>
<polygon points="929.83,81.42 934.11,80.24 936.42,90.38 933.05,91.31" fill="hsl(254.0,100%,50%)"/>
<polygon points="933.15,80.47 937.50,79.59 939.10,89.86 935.67,90.56" fill="hsl(258.0,100%,50%)"/>
<polygon points="936.52,79.75 940.92,79.18 941.80,89.54 938.33,89.99" fill="hsl(262.0,100%,50%)"/>
<polygon points="939.94,79.27 944.36,79.01 944.52,89.40 941.02,89.61" fill="hsl(266.0,100%,50%)"/>
<polygon points="943.38,79.03 947.81,79.07 947.24,89.46 943.74,89.42" fill="hsl(270.0,100%,50%)"/>
<polygon points="946.82,79.03 951.25,79.38 949.95,89.70 946.46,89.42" fill="hsl(274.0,100%,50%)"/>
<polygon points="950.26,79.27 954.65,79.93 952.64,90.14 949.18,89.61" fill="hsl(278.0,100%,50%)"/>
<polygon points="953.68,79.75 958.01,80.72 955.29,90.75 951.87,89.99" fill="hsl(282.0,100%,50%)"/>
<polygon points="957.05,80.47 961.30,81.73 957.89,91.56 954.53,90.56" fill="hsl(286.0,100%,50%)"/>
<polygon points="960.37,81.42 964.52,82.98 960.43,92.54 957.15,91.31" fill="hsl(290.0,100%,50%)"/>
<polygon points="963.61,82.60 967.64,84.44 962.89,93.70 959.71,92.24" fill="hsl(294.0,100%,50%)"/>
<polygon points="966.76,84.00 970.65,86.12 965.27,95.02 962.20,93.35" fill="hsl(298.0,100%,50%)"/>
<polygon points="969.80,85.62 973.54,88.01 967.55,96.51 964.60,94.63" fill="hsl(302.0,100%,50%)"/>
<polygon points="972.72,87.45 976.29,90.09 969.72,98.15 966.91,96.07" fill="hsl(306.0,100%,50%)"/>
<polygon points="975.51,89.47 978.88,92.36 971.77,99.95 969.11,97.67" fill="hsl(310.0,100%,50%)"/>
<polygon points="978.16,91.69 981.31,94.80 973.69,101.87 971.20,99.42" fill="hsl(314.0,100%,50%)"/>
<polygon points="980.64,94.08 983.57,97.41 975.47,103.93 973.15,101.31" fill="hsl(318.0,100%,50%)"/>
<polygon points="982.94,96.65 985.64,100.17 977.10,106.11 974.98,103.33" fill="hsl(322.0,100%,50%)"/>
<polygon points="985.07,99.36 987.51,103.07 978.58,108.40 976.65,105.48" fill="hsl(326.0,100%,50%)"/>
<polygon points="986.99,102.22 989.17,106.09 979.89,110.78 978.17,107.73" fill="hsl(330.0,100%,50%)"/>
<polygon points="988.72,105.21 990.62,109.21 981.04,113.25 979.53,110.09" fill="hsl(334.0,100%,50%)"/>
<polygon points="990.23,108.31 991.85,112.44 982.01,115.80 980.73,112.54" fill="hsl(338.0,100%,50%)"/>
<polygon points="991.52,111.50 992.85,115.74 982.80,118.40 981.75,115.06" fill="hsl(342.0,100%,50%)"/>
<polygon points="992.59,114.78 993.62,119.10 983.40,121.06 982.59,117.65" fill="hsl(346.0,100%,50%)"/>
<polygon points="993.42,118.13 994.15,122.50 983.82,123.75 983.25,120.29" fill="hsl(350.0,100%,50%)"/>
<polygon points="994.02,121.52 994.44,125.94 984.05,126.46 983.72,122.97" fill="hsl(354.0,100%,50%)"/>
<polygon points="994.38,124.95 994.49,129.39 984.09,129.18 984.00,125.68" fill="hsl(358.0,100%,50%)"/>
<defs><linearGradient id="tw" gradientUnits="userSpaceOnUse" x1="941.1" y1="90.2" x2="947.1" y2="147.5"><stop offset="0" stop-color="#fff"/><stop offset="0.5" stop-color="#fff" stop-opacity="0.36"/><stop offset="1" stop-color="#fff" stop-opacity="0"/></linearGradient>
<linearGradient id="tk" gradientUnits="userSpaceOnUse" x1="980.2" y1="144.0" x2="927.6" y2="120.6"><stop offset="0" stop-color="#000"/><stop offset="0.5" stop-color="#000" stop-opacity="0.6"/><stop offset="1" stop-color="#000" stop-opacity="0.05"/></linearGradient></defs>
<polygon points="914.0,151.0 941.1,90.2 980.2,144.0" fill="#22e070"/><polygon points="914.0,151.0 941.1,90.2 980.2,144.0" fill="url(#tk)"/><polygon points="914.0,151.0 941.1,90.2 980.2,144.0" fill="url(#tw)"/>
<circle cx="909.3" cy="154.4" r="2.3" fill="none" stroke="#fff" stroke-width="1.1"/>
<circle cx="913.6" cy="151.2" r="2.3" fill="none" stroke="#fff" stroke-width="1.1"/>
<text x="861" y="153.8" fill="#c4c4c4" font-size="7">H: 144</text>
<text x="861" y="162.1" fill="#c4c4c4" font-size="7">S: 100</text>
<text x="861" y="170.4" fill="#c4c4c4" font-size="7">L: 50</text>
<text x="860.6" y="181.4" fill="#c4c4c4" font-size="7.2">Opacity</text>
<circle cx="865.3" cy="190.3" r="4.3" fill="#12f565"/>
<defs><pattern id="ck" width="4.6" height="4.6" patternUnits="userSpaceOnUse" x="873.6" y="187.7"><rect width="4.6" height="4.6" fill="#f4f4f4"/><rect width="2.3" height="2.3" fill="#b4b4b4"/><rect x="2.3" y="2.3" width="2.3" height="2.3" fill="#b4b4b4"/></pattern><linearGradient id="cf" x1="0" x2="1" y1="0" y2="0"><stop offset="0" stop-color="#3d3d3d" stop-opacity="0"/><stop offset="0.6" stop-color="#3d3d3d" stop-opacity="0.35"/><stop offset="1" stop-color="#3d3d3d" stop-opacity="1"/></linearGradient></defs>
<rect x="873.6" y="187.7" width="97" height="4.6" rx="2.3" fill="url(#ck)"/><rect x="873.4" y="187.5" width="97.4" height="5" fill="url(#cf)"/>
<circle cx="972.6" cy="190" r="2.9" fill="#262626" stroke="#f4f4f4" stroke-width="1"/>
<rect x="981" y="184" width="28.6" height="12" rx="1.5" fill="#343434"/><text x="984.6" y="192.6" fill="#f2f2f2" font-size="7" stroke="#f2f2f2" stroke-width="0.15">100 %</text>
<rect x="1010.2" y="184" width="10.6" height="12" rx="1.5" fill="#393939" stroke="#303030" stroke-width="0.5"/><path d="M1013.4 189H1017.6L1015.5 191.8Z" fill="#d8d8d8"/>
<rect x="854" y="201.4" width="170" height="2" fill="#2e2e2e"/>
<rect x="854" y="202.8" width="170" height="12.8" fill="#2e2e2e"/>
<rect x="867.8" y="203.4" width="23.8" height="12.2" fill="#3d3d3d"/>
<path d="M859.6 206.2V212.2M861.6 206.2V212.2" stroke="#4a4a4a" stroke-width="0.7"/>
<text x="879.8" y="212.0" text-anchor="middle" fill="#f4f4f4" stroke="#f4f4f4" stroke-width="0.3" textLength="20.0" lengthAdjust="spacingAndGlyphs">Layers</text>
<text x="895.5" y="212" fill="#8a8a8a" textLength="21" lengthAdjust="spacingAndGlyphs">Effects</text><text x="922.2" y="212" fill="#8a8a8a" textLength="18.7" lengthAdjust="spacingAndGlyphs">Styles</text><text x="946.9" y="212" fill="#8a8a8a" textLength="33" lengthAdjust="spacingAndGlyphs">Text Styles</text>
<path d="M919.3 206V213.5M943.8 206V213.5" stroke="#4c4c4c" stroke-width="0.8"/>
<path d="M1014.0 207.4h5M1014.0 209.0h5M1014.0 210.6h5" stroke="#c8c8c8" stroke-width="1"/><path d="M1019.4 210.4h2.4l-1.2 1.6Z" fill="#c8c8c8"/>
<text x="858.8" y="227.8" fill="#c8c8c8" textLength="25.2" lengthAdjust="spacingAndGlyphs">Opacity:</text>
<rect x="894.5" y="219.6" width="30.3" height="12" rx="1.5" fill="#333"/><text x="896.6" y="228.3" fill="#e0e0e0" font-size="6.6">100 %</text><path d="M918.4 224.6H922L920.2 227Z" fill="#d8d8d8"/>
<rect x="926.8" y="219.6" width="69.3" height="12" rx="1.5" fill="#484848"/><text x="929.8" y="228.2" fill="#e8e8e8" font-size="7.2">Normal</text><path d="M989.4 224.4L990.8 222.6L992.2 224.4ZM989.4 227L990.8 228.8L992.2 227Z" fill="#d8d8d8"/>
<path d="M1004.40 225.70L1006.30 225.70M1003.87 226.97L1005.22 228.32M1002.60 227.50L1002.60 229.40M1001.33 226.97L999.98 228.32M1000.80 225.70L998.90 225.70M1001.33 224.43L999.98 223.08M1002.60 223.90L1002.60 222.00M1003.87 224.43L1005.22 223.08" stroke="#d0d0d0" stroke-width="1.4"/><circle cx="1002.6" cy="225.7" r="2.2" fill="none" stroke="#d0d0d0" stroke-width="1.4"/>
<rect x="1012.4" y="225" width="5.6" height="4.4" rx="0.6" fill="#b4b4b4"/><path d="M1013.6 225V223.4A1.6 1.6 0 0 1 1016.8 223.4V225" stroke="#b4b4b4" stroke-width="0.9" fill="none"/>
<rect x="855" y="234.4" width="160" height="21.2" fill="#3a3a3a"/>
<path d="M855 234.4H1015" stroke="#2c2c2c" stroke-width="0.7"/>
<rect x="869" y="235.8" width="18.7" height="18.7" fill="#262626" stroke="#1c1c1c" stroke-width="0.5"/>
<polygon points="870.1,238.5 886.8,246.3 883.4,249.4 876.3,246.7" fill="#12f565"/>
<text x="891.6" y="247.1" fill="#a8a8a8" font-size="7">(Curve)</text>
<rect x="1002" y="241.2" width="8.6" height="8.2" rx="1" fill="#464646"/><path d="M1003.8 245.6L1005.6 247.8L1009 242.4" stroke="#fff" stroke-width="1.1" fill="none"/>
<rect x="855" y="255.6" width="160" height="21.2" fill="#3a3a3a"/>
<path d="M855 255.6H1015" stroke="#2c2c2c" stroke-width="0.7"/>
<rect x="869" y="257.0" width="18.7" height="18.7" fill="#262626" stroke="#1c1c1c" stroke-width="0.5"/>
<polygon points="870.1,260.1 886.8,267.2 883.4,270.3 876.3,267.9" fill="#12f565"/>
<text x="891.6" y="268.3" fill="#a8a8a8" font-size="7">(Curve)</text>
<rect x="1002" y="262.4" width="8.6" height="8.2" rx="1" fill="#464646"/><path d="M1003.8 266.8L1005.6 269.0L1009 263.6" stroke="#fff" stroke-width="1.1" fill="none"/>
<rect x="855" y="276.8" width="160" height="21.2" fill="#3a3a3a"/>
<path d="M855 276.8H1015" stroke="#2c2c2c" stroke-width="0.7"/>
<rect x="869" y="278.2" width="18.7" height="18.7" fill="#262626" stroke="#1c1c1c" stroke-width="0.5"/>
<polygon points="870.1,286.5 875.6,282.9 880.3,285.2 886.8,294.6 883.0,292.8" fill="#12f565"/>
<text x="891.6" y="289.5" fill="#a8a8a8" font-size="7">(Curve)</text>
<rect x="1002" y="283.6" width="8.6" height="8.2" rx="1" fill="#464646"/><path d="M1003.8 288.0L1005.6 290.2L1009 284.8" stroke="#fff" stroke-width="1.1" fill="none"/>
<rect x="855" y="298.0" width="160" height="21.2" fill="#3a3a3a"/>
<path d="M855 298.0H1015" stroke="#2c2c2c" stroke-width="0.7"/>
<rect x="869" y="299.4" width="18.7" height="18.7" fill="#262626" stroke="#1c1c1c" stroke-width="0.5"/>
<polygon points="870.1,307.7 875.6,304.1 880.3,306.6 886.8,315.5 883.0,313.8" fill="#12f565"/>
<text x="891.6" y="310.7" fill="#a8a8a8" font-size="7">(Curve)</text>
<rect x="1002" y="304.8" width="8.6" height="8.2" rx="1" fill="#464646"/><path d="M1003.8 309.2L1005.6 311.4L1009 306.0" stroke="#fff" stroke-width="1.1" fill="none"/>
<rect x="855" y="319.2" width="160" height="21.2" fill="#3a3a3a"/>
<path d="M855 319.2H1015" stroke="#2c2c2c" stroke-width="0.7"/>
<rect x="869" y="320.6" width="18.7" height="18.7" fill="#262626" stroke="#1c1c1c" stroke-width="0.5"/>
<polygon points="869.8,323.2 887.0,332.7 887.0,337.3 869.8,329.3" fill="#12f565"/>
<text x="891.6" y="331.9" fill="#a8a8a8" font-size="7">(Rectangle)</text>
<rect x="1002" y="326.0" width="8.6" height="8.2" rx="1" fill="#464646"/><path d="M1003.8 330.4L1005.6 332.6L1009 327.2" stroke="#fff" stroke-width="1.1" fill="none"/>
<rect x="855" y="340.4" width="160" height="21.2" fill="#3a3a3a"/>
<path d="M855 340.4H1015" stroke="#2c2c2c" stroke-width="0.7"/>
<rect x="869" y="341.8" width="18.7" height="18.7" fill="#262626" stroke="#1c1c1c" stroke-width="0.5"/>
<polygon points="869.8,343.2 887.0,351.8 887.0,359.7 869.8,351.9" fill="#12f565"/>
<text x="891.6" y="353.1" fill="#a8a8a8" font-size="7">(Rectangle)</text>
<rect x="1002" y="347.2" width="8.6" height="8.2" rx="1" fill="#464646"/><path d="M1003.8 351.6L1005.6 353.8L1009 348.4" stroke="#fff" stroke-width="1.1" fill="none"/>
<rect x="855" y="361.6" width="160" height="21.2" fill="#3a3a3a"/>
<path d="M855 361.6H1015" stroke="#2c2c2c" stroke-width="0.7"/>
<rect x="869" y="363.0" width="18.7" height="18.7" fill="#262626" stroke="#1c1c1c" stroke-width="0.5"/>
<polygon points="869.8,365.1 887.0,372.9 887.0,381.0 869.8,373.8" fill="#12f565"/>
<text x="891.6" y="374.3" fill="#a8a8a8" font-size="7">(Rectangle)</text>
<rect x="1002" y="368.4" width="8.6" height="8.2" rx="1" fill="#464646"/><path d="M1003.8 372.8L1005.6 375.0L1009 369.6" stroke="#fff" stroke-width="1.1" fill="none"/>
<rect x="855" y="382.8" width="160" height="21.2" fill="#3a3a3a"/>
<path d="M855 382.8H1015" stroke="#2c2c2c" stroke-width="0.7"/>
<rect x="869" y="384.2" width="18.7" height="18.7" fill="#262626" stroke="#1c1c1c" stroke-width="0.5"/>
<polygon points="869.8,386.8 887.0,396.3 887.0,400.7 869.8,392.5" fill="#12f565"/>
<text x="891.6" y="395.5" fill="#a8a8a8" font-size="7">(Rectangle)</text>
<rect x="1002" y="389.6" width="8.6" height="8.2" rx="1" fill="#464646"/><path d="M1003.8 394.0L1005.6 396.2L1009 390.8" stroke="#fff" stroke-width="1.1" fill="none"/>
<rect x="855" y="404.0" width="160" height="9.6" fill="#4180d8"/>
<path d="M855 404.0H1015" stroke="#2c2c2c" stroke-width="0.7"/>
<rect x="869" y="405.4" width="18.7" height="8.2" fill="#262626" stroke="#1c1c1c" stroke-width="0.5"/>
<rect x="876.6" y="407.0" width="3.6" height="6.6" fill="#12f565"/>
<text x="891.6" y="416.7" fill="#e8eefc" font-size="7">(Rectangle)</text>
<rect x="1002" y="410.8" width="8.6" height="2.8" fill="#2a2a2a"/>
<rect x="1017.4" y="236.8" width="3.8" height="39" rx="1.9" fill="#5c5c5c"/>
<rect x="854" y="413.6" width="170" height="16.9" fill="#3c3c3c"/>
<path d="M860 418.4L865.4 416.2L870.8 418.4L865.4 420.6ZM860 420.8L865.4 423L870.8 420.8M860 423.2L865.4 425.4L870.8 423.2" fill="#b8b8b8" stroke="#b8b8b8" stroke-width="0.7"/>
<rect x="909" y="417" width="8.6" height="8.2" fill="#d0d0d0"/><circle cx="913.3" cy="421.1" r="2.7" fill="#3a3a3a"/>
<circle cx="927.8" cy="421.1" r="3.7" fill="none" stroke="#d0d0d0" stroke-width="0.9"/><path d="M927.8 417.4A3.7 3.7 0 0 0 927.8 424.8Z" fill="#d0d0d0"/>
<text x="937" y="424.2" font-family="Liberation Serif, serif" font-style="italic" font-size="9.5" fill="#bdbdbd">fx</text>
<path d="M984 416.6H988.4L990.6 418.8V425.6H984Z" fill="none" stroke="#d0d0d0" stroke-width="0.9"/>
<defs><pattern id="ck2" width="2.4" height="2.4" patternUnits="userSpaceOnUse" x="997.8" y="417"><rect width="2.4" height="2.4" fill="#d8d8d8"/><rect width="1.2" height="1.2" fill="#777"/><rect x="1.2" y="1.2" width="1.2" height="1.2" fill="#777"/></pattern></defs><rect x="997.8" y="417" width="7.4" height="8" fill="url(#ck2)"/>
<path d="M1012.6 418.4H1018.4V425.6H1012.6ZM1011.8 417.6H1019.2M1014.4 416.4H1016.6" fill="#8c8c8c" stroke="#8c8c8c" stroke-width="0.8"/>
<rect x="854" y="430.4" width="170" height="12.5" fill="#2e2e2e"/>
<rect x="904.0" y="431.0" width="26.0" height="11.9" fill="#3d3d3d"/>
<path d="M859.6 433.6V439.6M861.6 433.6V439.6" stroke="#4a4a4a" stroke-width="0.7"/>
<text x="869.5" y="439.4" fill="#8a8a8a" textLength="31" lengthAdjust="spacingAndGlyphs">Transform</text>
<text x="917.0" y="439.4" text-anchor="middle" fill="#f4f4f4" stroke="#f4f4f4" stroke-width="0.3" textLength="21.5" lengthAdjust="spacingAndGlyphs">History</text>
<text x="933.6" y="439.4" fill="#8a8a8a" textLength="29" lengthAdjust="spacingAndGlyphs">Navigator</text>
<text x="860.6" y="456.2" fill="#c8c8c8" textLength="25.6" lengthAdjust="spacingAndGlyphs">Position:</text>
<path d="M894.7 453.9H1013" stroke="#a8c4ee" stroke-width="1.4" stroke-linecap="round"/><circle cx="1015" cy="453.9" r="2.7" fill="#f4f4f4"/><circle cx="1015" cy="453.9" r="0.9" fill="#8aa8d8"/>
<rect x="855" y="460.5" width="169" height="12.8" fill="#2e2e2e"/>
<text x="858.6" y="469.4" fill="#f2f2f2" font-size="6.9" stroke="#f2f2f2" stroke-width="0.22" textLength="32.2" lengthAdjust="spacingAndGlyphs">Move guide</text>
<rect x="855" y="473.3" width="169" height="12.8" fill="#363636"/>
<text x="858.6" y="482.2" fill="#f2f2f2" font-size="6.9" stroke="#f2f2f2" stroke-width="0.22" textLength="58.6" lengthAdjust="spacingAndGlyphs">Set current selection</text>
<path d="M1013.6 475.9V483.7M1013.6 479.3Q1017.4 479.5 1017.8 483.3" stroke="#e8e8e8" stroke-width="0.9" fill="none"/><circle cx="1013.6" cy="475.9" r="1.1" fill="#e8e8e8"/><circle cx="1013.6" cy="483.7" r="1.1" fill="#e8e8e8"/><circle cx="1017.8" cy="483.7" r="1.1" fill="#e8e8e8"/>
<rect x="855" y="486.1" width="169" height="12.8" fill="#2e2e2e"/>
<text x="858.6" y="495.0" fill="#f2f2f2" font-size="6.9" stroke="#f2f2f2" stroke-width="0.22" textLength="28.0" lengthAdjust="spacingAndGlyphs">Transform</text>
<rect x="855" y="498.9" width="169" height="12.8" fill="#363636"/>
<text x="858.6" y="507.8" fill="#f2f2f2" font-size="6.9" stroke="#f2f2f2" stroke-width="0.22" textLength="58.6" lengthAdjust="spacingAndGlyphs">Set current selection</text>
<rect x="855" y="511.7" width="169" height="12.8" fill="#2e2e2e"/>
<text x="858.6" y="520.6" fill="#f2f2f2" font-size="6.9" stroke="#f2f2f2" stroke-width="0.22" textLength="28.0" lengthAdjust="spacingAndGlyphs">Transform</text>
<rect x="855" y="524.5" width="169" height="12.8" fill="#363636"/>
<text x="858.6" y="533.4" fill="#f2f2f2" font-size="6.9" stroke="#f2f2f2" stroke-width="0.22" textLength="58.6" lengthAdjust="spacingAndGlyphs">Set current selection</text>
<path d="M1013.6 527.1V534.9M1013.6 530.5Q1017.4 530.7 1017.8 534.5" stroke="#e8e8e8" stroke-width="0.9" fill="none"/><circle cx="1013.6" cy="527.1" r="1.1" fill="#e8e8e8"/><circle cx="1013.6" cy="534.9" r="1.1" fill="#e8e8e8"/><circle cx="1017.8" cy="534.9" r="1.1" fill="#e8e8e8"/>
<rect x="855" y="537.3" width="169" height="12.8" fill="#2e2e2e"/>
<text x="858.6" y="546.2" fill="#f2f2f2" font-size="6.9" stroke="#f2f2f2" stroke-width="0.22" textLength="42.3" lengthAdjust="spacingAndGlyphs">Move nodes up</text>
<rect x="855" y="550.1" width="169" height="12.8" fill="#4a80d0"/>
<text x="858.6" y="559.0" fill="#9db6e0" font-size="6.9" stroke="#9db6e0" stroke-width="0.22" textLength="42.3" lengthAdjust="spacingAndGlyphs">Move nodes up</text>
</svg>
<svg class="abs" style="left:520px;top:205px" width="180" height="252" viewBox="520 205 180 252" font-family="Liberation Sans, sans-serif" font-size="7">
<defs><filter id="sh" x="-10%" y="-10%" width="120%" height="120%"><feGaussianBlur stdDeviation="2"/></filter></defs>
<rect x="524.5" y="212" width="168.8" height="240" fill="#000" opacity="0.35" filter="url(#sh)"/>
<rect x="524.5" y="210.6" width="168.8" height="240.2" fill="#3f3f3f"/>
<rect x="524.5" y="210.6" width="168.8" height="13.2" fill="#2d2d2d"/>
<rect x="548.4" y="211.2" width="32.2" height="12.6" fill="#3f3f3f"/>
<circle cx="530.4" cy="217.4" r="2.8" fill="#555"/><path d="M529 216L531.8 218.8M531.8 216L529 218.8" stroke="#3a3a3a" stroke-width="0.7"/>
<path d="M540.6 214.4V220.6M542.6 214.4V220.6" stroke="#4a4a4a" stroke-width="0.7"/>
<text x="550.2" y="220" fill="#f4f4f4" stroke="#f4f4f4" stroke-width="0.25" textLength="28.4" lengthAdjust="spacingAndGlyphs">Isometric</text>
<text x="609" y="239.6" fill="#dcdcdc" text-anchor="middle" textLength="41.6" lengthAdjust="spacingAndGlyphs">Current plane</text>
<rect x="561" y="249" width="31" height="35.6" rx="1" fill="#282828"/>
<polygon points="576.6,254.4 582.5,257.5 576.6,260.6 570.7,257.5" fill="#fbfbfb"/>
<polygon points="570.7,257.5 576.6,260.6 576.6,267.6 570.7,264.5" fill="#e4e0dc"/>
<polygon points="576.6,260.6 582.5,257.5 582.5,264.5 576.6,267.6" fill="#c9c5c1"/>
<polygon points="577.0,260.9 582.1,258.2 582.1,264.2 577.0,266.9" fill="#4ba3ee" stroke="#4ba3ee" stroke-width="0.5" stroke-linejoin="round"/>
<polygon points="608.6,254.4 614.5,257.5 608.6,260.6 602.7,257.5" fill="#fbfbfb"/>
<polygon points="602.7,257.5 608.6,260.6 608.6,267.6 602.7,264.5" fill="#e4e0dc"/>
<polygon points="608.6,260.6 614.5,257.5 614.5,264.5 608.6,267.6" fill="#c9c5c1"/>
<polygon points="603.1,258.2 608.2,260.9 608.2,266.9 603.1,264.2" fill="#4ba3ee" stroke="#4ba3ee" stroke-width="0.5" stroke-linejoin="round"/>
<polygon points="640.8,254.4 646.7,257.5 640.8,260.6 634.9,257.5" fill="#fbfbfb"/>
<polygon points="634.9,257.5 640.8,260.6 640.8,267.6 634.9,264.5" fill="#e4e0dc"/>
<polygon points="640.8,260.6 646.7,257.5 646.7,264.5 640.8,267.6" fill="#c9c5c1"/>
<polygon points="640.8,254.8 645.9,257.5 640.8,260.2 635.7,257.5" fill="#4ba3ee" stroke="#4ba3ee" stroke-width="0.5" stroke-linejoin="round"/>
<text x="576.6" y="281" fill="#f0f0f0" text-anchor="middle" textLength="15.6" lengthAdjust="spacingAndGlyphs">Front</text>
<text x="608.6" y="281" fill="#e0e0e0" text-anchor="middle" textLength="13.2" lengthAdjust="spacingAndGlyphs">Side</text>
<text x="640.8" y="281" fill="#e0e0e0" text-anchor="middle" textLength="11.4" lengthAdjust="spacingAndGlyphs">Top</text>
<path d="M528 290.6H690" stroke="#303030" stroke-width="0.8"/>
<text x="608.6" y="304.4" fill="#dcdcdc" text-anchor="middle" textLength="65" lengthAdjust="spacingAndGlyphs">Plane editing options</text>
<defs><linearGradient id="eb" x1="0" x2="0" y1="0" y2="1"><stop offset="0" stop-color="#2e2e2e"/><stop offset="1" stop-color="#1f1f1f"/></linearGradient></defs>
<rect x="550.4" y="312" width="116.6" height="14.4" rx="1" fill="url(#eb)"/>
<text x="571.6" y="322.0" fill="#e8e8e8" textLength="38.4" lengthAdjust="spacingAndGlyphs">Edit in plane</text>
<path d="M557.7 314.0V323.5L561.0 325.1" stroke="#808080" stroke-width="0.5" fill="none" opacity="0.8"/><path d="M557.7 323.5L554.9 324.9" stroke="#a87848" stroke-width="0.5" opacity="0.8"/>
<path d="M562.1 313.9l1.2 2.6 2.8 0.3 -2.1 1.9 0.6 2.8 -2.5 -1.4 -2.5 1.4 0.6 -2.8 -2.1 -1.9 2.8 -0.3Z" fill="#3f98ea"/>
<path d="M562.9 320.3v4.6l1.2 -1 1.6 0.2Z" fill="#fff"/>
<text x="571.6" y="339.1" fill="#e8e8e8" textLength="34.4" lengthAdjust="spacingAndGlyphs">Fit to plane</text>
<path d="M557.7 331.1V340.6L561.0 342.2" stroke="#808080" stroke-width="0.5" fill="none" opacity="0.8"/><path d="M557.7 340.6L554.9 342.0" stroke="#a87848" stroke-width="0.5" opacity="0.8"/>
<rect x="559.5" y="331.6" width="4.6" height="5" fill="none" stroke="#d0d0d0" stroke-width="0.7"/><rect x="562.1" y="336.2" width="4.8" height="4.6" fill="#3f98ea"/><path d="M559.1 337.2l1.4 -1.4v2.8Z" fill="#fff"/>
<text x="571.6" y="356.2" fill="#e8e8e8" textLength="69.6" lengthAdjust="spacingAndGlyphs">Flip horizontal in plane</text>
<path d="M557.7 348.2V357.7L561.0 359.3" stroke="#808080" stroke-width="0.5" fill="none" opacity="0.8"/><path d="M557.7 357.7L554.9 359.1" stroke="#a87848" stroke-width="0.5" opacity="0.8"/>
<polygon points="558.9,356.9 561.9,348.5 561.9,357.7" fill="#3f7fc8"/><polygon points="562.4,348.5 565.1,358.3 562.4,357.9" fill="#8a8a8a"/>
<text x="571.6" y="373.5" fill="#e8e8e8" textLength="61.6" lengthAdjust="spacingAndGlyphs">Flip vertical in plane</text>
<path d="M557.7 365.5V375.0L561.0 376.6" stroke="#808080" stroke-width="0.5" fill="none" opacity="0.8"/><path d="M557.7 375.0L554.9 376.4" stroke="#a87848" stroke-width="0.5" opacity="0.8"/>
<polygon points="559.5,370.4 564.7,366.0 564.7,371.2" fill="#8a8a8a"/><polygon points="559.5,371.0 564.7,371.8 564.7,375.8" fill="#3f7fc8"/>
<text x="571.6" y="390.8" fill="#e8e8e8" textLength="89.4" lengthAdjust="spacingAndGlyphs">Rotate anticlockwise in plane</text>
<path d="M557.7 382.8V392.3L561.0 393.9" stroke="#808080" stroke-width="0.5" fill="none" opacity="0.8"/><path d="M557.7 392.3L554.9 393.7" stroke="#a87848" stroke-width="0.5" opacity="0.8"/>
<polygon points="559.1,385.7 564.1,383.7 564.1,390.5 559.1,392.5" fill="#3f88d8"/>
<path d="M566.1 382.9q-2.2 -0.4 -2.4 2" stroke="#fff" stroke-width="0.8" fill="none"/><path d="M562.5 384.5l1.2 1.6 1.2 -1.6Z" fill="#fff"/>
<text x="571.6" y="408.0" fill="#e8e8e8" textLength="78.0" lengthAdjust="spacingAndGlyphs">Rotate clockwise in plane</text>
<path d="M557.7 400.0V409.5L561.0 411.1" stroke="#808080" stroke-width="0.5" fill="none" opacity="0.8"/><path d="M557.7 409.5L554.9 410.9" stroke="#a87848" stroke-width="0.5" opacity="0.8"/>
<polygon points="559.1,402.9 564.1,400.9 564.1,407.7 559.1,409.7" fill="#3f88d8"/>
<path d="M562.9 400.1q2.2 -0.4 2.4 2" stroke="#fff" stroke-width="0.8" fill="none"/><path d="M564.1 401.7l1.2 1.6 1.2 -1.6Z" fill="#fff"/>
<rect x="574.9" y="431.4" width="68.7" height="11" rx="1.5" fill="#454545" stroke="#303030" stroke-width="0.5"/>
<text x="609.2" y="439.4" fill="#e4e4e4" text-anchor="middle" textLength="46.6" lengthAdjust="spacingAndGlyphs">Grid Settings...</text>
</svg>
<div class="abs" id="status"><span>'Rectangle' selected. <b>Drag</b> to move selection. <b>Click</b> another object to select it. <b>Click</b> on an empty area to deselect selection.</span></div>
</div>
</body></html>
